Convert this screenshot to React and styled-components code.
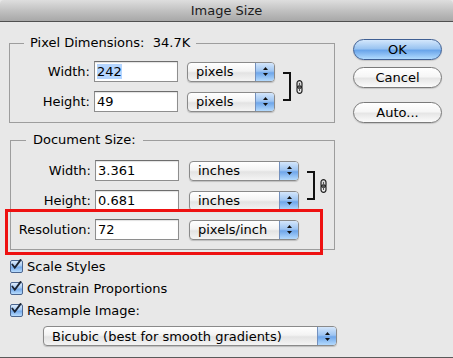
import React from "react";
import styled, { createGlobalStyle } from "styled-components";

const GlobalStyle = createGlobalStyle`
  body {
    margin: 0;
    background: #e8e8e8;
  }
`;

const Window = styled.div`
  width: 453px;
  height: 358px;
  box-sizing: border-box;
  position: relative;
  overflow: hidden;
  background: #e8e8e8;
  border-bottom: 1px solid #5a5a5a;
  font-family: "DejaVu Sans", "Liberation Sans", sans-serif;
  font-size: 13px;
  color: #000;
`;

const TitleBar = styled.div`
  height: 22px;
  box-sizing: border-box;
  display: flex;
  align-items: center;
  justify-content: center;
  border-bottom: 1px solid #505050;
  border-radius: 4px 4px 0 0;
  background: linear-gradient(#dedede, #bcbcbc 60%, #a8a8a8);
  color: #1c1c1c;
  font-size: 13px;
`;

const Body = styled.div`
  display: flex;
  padding-left: 9px;
`;

const LeftCol = styled.div`
  width: 326px;
  display: flex;
  flex-direction: column;
`;

const RightCol = styled.div`
  display: flex;
  flex-direction: column;
  margin-left: 18px;
  padding-top: 17px;
`;

const Group = styled.fieldset`
  margin: ${(p) => p.$top}px 0 0 ${(p) => p.$left || 0}px;
  padding: 0 0 ${(p) => p.$bottom}px 0;
  border: 1px solid #9d9d9d;
  min-width: 0;
`;

const Legend = styled.legend`
  margin-left: ${(p) => p.$offset}px;
  padding: 0 ${(p) => p.$pad}px;
  line-height: 16px;
`;

const Block = styled.div`
  display: flex;
  align-items: center;
  margin-top: ${(p) => p.$top || 0}px;
`;

const Rows = styled.div`
  display: flex;
  flex-direction: column;
  gap: 9px;
`;

const Row = styled.div`
  display: flex;
  align-items: center;
  height: 21px;
`;

const Label = styled.span`
  width: ${(p) => p.$width}px;
  text-align: right;
  margin-right: 4px;
`;

const Field = styled.div`
  width: 84px;
  height: 21px;
  box-sizing: border-box;
  display: flex;
  align-items: center;
  padding-left: 2px;
  background: #fff;
  border: 1px solid #8e8e8e;
  border-top-color: #6d6d6d;
  box-shadow: inset 0 1px 1px rgba(0, 0, 0, 0.12);
`;

const Selected = styled.span`
  background: #b5d5fe;
`;

const Select = styled.div`
  width: ${(p) => p.$width}px;
  height: 20px;
  box-sizing: border-box;
  margin-left: ${(p) => p.$gap || 0}px;
  display: flex;
  border: 1px solid #8a8a8a;
  border-radius: 4px;
  background: linear-gradient(#ffffff, #f3f3f3 45%, #e3e3e3 55%, #f4f4f4);
  box-shadow: 0 1px 1px rgba(0, 0, 0, 0.18);
`;

const SelectText = styled.span`
  flex: 1;
  display: flex;
  align-items: center;
  padding-left: 8px;
  white-space: nowrap;
`;

const Arrows = styled.span`
  width: 18px;
  display: flex;
  align-items: center;
  justify-content: center;
  border-left: 1px solid #7390bd;
  border-radius: 0 3px 3px 0;
  background: linear-gradient(#d4e6fb, #9ec5f2 45%, #6fa6ea 55%, #b4dafd);
`;

const Bracket = styled.div`
  width: 6px;
  height: 25px;
  margin-left: ${(p) => p.$gap}px;
  border: 2px solid #111;
  border-left: none;
`;

const Link = styled.svg`
  margin-left: 5px;
  flex: none;
`;

const Checks = styled.div`
  display: flex;
  flex-direction: column;
  margin-top: 5px;
  padding-left: 1px;
`;

const CheckRow = styled.label`
  display: flex;
  align-items: center;
  height: 22px;
  gap: 4px;
`;

const Box = styled.span`
  width: 13px;
  height: 13px;
  box-sizing: border-box;
  display: flex;
  border: 1px solid #4b6690;
  border-radius: 2px;
  background: linear-gradient(#dcebfc, #a4c9f3 45%, #74a9ea 55%, #b8dcfd);
  overflow: visible;
`;

const Resample = styled.div`
  margin: 5px 0 0 34px;
`;

const Button = styled.div`
  width: 89px;
  height: 21px;
  box-sizing: border-box;
  margin-top: ${(p) => p.$top || 0}px;
  display: flex;
  align-items: center;
  justify-content: center;
  border-radius: 11px;
  border: 1px solid ${(p) => (p.$primary ? "#3f5f93" : "#7a7a7a")};
  background: ${(p) =>
    p.$primary
      ? "linear-gradient(#d3e7fc, #9ac4f1 45%, #6aa5ea 55%, #b2dbfe)"
      : "linear-gradient(#ffffff, #f6f6f6 45%, #e6e6e6 55%, #fbfbfb)"};
  box-shadow: 0 1px 1px rgba(0, 0, 0, 0.15);
`;

const Highlight = styled.div`
  position: absolute;
  left: 5px;
  top: 209px;
  width: 318px;
  height: 46px;
  box-sizing: border-box;
  border: 3px solid #ee1111;
  pointer-events: none;
`;

function ArrowIcon() {
  return (
    <svg width="7" height="11" viewBox="0 0 7 11">
      <path d="M3.5 1 L6 4 L1 4 Z" fill="#111" />
      <path d="M1 7 L6 7 L3.5 10 Z" fill="#111" />
    </svg>
  );
}

function LinkIcon() {
  return (
    <Link width="7" height="14" viewBox="0 0 7 14">
      <rect x="1" y="0.7" width="5" height="7.5" rx="2.5" fill="#d8d8d8" stroke="#222" strokeWidth="1.2" />
      <rect x="1" y="5.8" width="5" height="7.5" rx="2.5" fill="none" stroke="#222" strokeWidth="1.2" />
      <line x1="3.5" y1="3" x2="3.5" y2="11" stroke="#555" strokeWidth="1" />
    </Link>
  );
}

function CheckIcon() {
  return (
    <svg width="13" height="13" viewBox="0 0 13 13" style={{ margin: "-3px 0 0 -1px" }}>
      <path d="M2.5 6.5 L5.2 10 L11.5 1.5" fill="none" stroke="#1b2433" strokeWidth="2" strokeLinecap="round" />
    </svg>
  );
}

function Dropdown({ width, gap, value }) {
  return (
    <Select $width={width} $gap={gap}>
      <SelectText>{value}</SelectText>
      <Arrows>
        <ArrowIcon />
      </Arrows>
    </Select>
  );
}

function FieldRow({ label, value, unit, unitWidth, selected }) {
  return (
    <Row>
      <Label $width={80}>{label}</Label>
      <Field>{selected ? <Selected>{value}</Selected> : value}</Field>
      <Dropdown width={unitWidth} gap={selected !== undefined ? 9 : 10} value={unit} />
    </Row>
  );
}

const checks = ["Scale Styles", "Constrain Proportions", "Resample Image:"];

export default function App() {
  return (
    <>
      <GlobalStyle />
      <Window>
        <TitleBar>Image Size</TitleBar>
        <Body>
          <LeftCol>
            <Group $top={13} $bottom={10}>
              <Legend $offset={14} $pad={6}>Pixel Dimensions:&nbsp; 34.7K</Legend>
              <Block $top={10}>
                <Rows>
                  <FieldRow label="Width:" value="242" unit="pixels" unitWidth={88} selected />
                  <FieldRow label="Height:" value="49" unit="pixels" unitWidth={88} selected={false} />
                </Rows>
                <Bracket $gap={8} />
                <LinkIcon />
              </Block>
            </Group>

            <Group $top={9} $left={1} $bottom={9}>
              <Legend $offset={15} $pad={7}>Document Size:</Legend>
              <Block $top={12}>
                <Rows>
                  <FieldRow label="Width:" value="3.361" unit="inches" unitWidth={110} />
                  <FieldRow label="Height:" value="0.681" unit="inches" unitWidth={110} />
                </Rows>
                <Bracket $gap={8} />
                <LinkIcon />
              </Block>
              <Block $top={8}>
                <FieldRow label="Resolution:" value="72" unit="pixels/inch" unitWidth={110} />
              </Block>
            </Group>

            <Checks>
              {checks.map((text) => (
                <CheckRow key={text}>
                  <Box>
                    <CheckIcon />
                  </Box>
                  {text}
                </CheckRow>
              ))}
            </Checks>

            <Resample>
              <Dropdown width={294} value="Bicubic (best for smooth gradients)" />
            </Resample>
          </LeftCol>

          <RightCol>
            <Button $primary>OK</Button>
            <Button $top={7}>Cancel</Button>
            <Button $top={14}>Auto...</Button>
          </RightCol>
        </Body>
        <Highlight />
      </Window>
    </>
  );
}
